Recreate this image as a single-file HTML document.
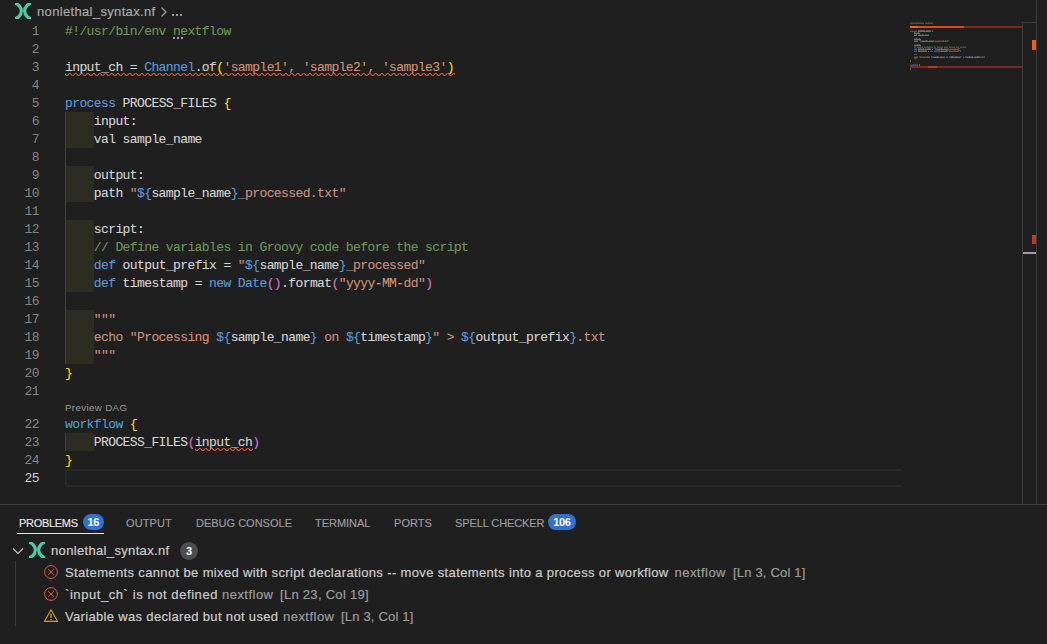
<!DOCTYPE html><html><head><meta charset="utf-8"><style>
*{margin:0;padding:0;box-sizing:border-box}
html,body{width:1047px;height:644px;overflow:hidden;background:#1f1f1f}
body{position:relative;font-family:"Liberation Sans",sans-serif}
.a{position:absolute;white-space:pre}
.code{font-family:"Liberation Mono",monospace;font-size:13px;letter-spacing:-0.6px;line-height:18px;height:18px;left:65px;padding-top:1px;-webkit-text-stroke:0.1px currentColor}
.ln{font-family:"Liberation Mono",monospace;font-size:13px;letter-spacing:-0.6px;padding-top:1px;line-height:18px;height:18px;left:0;width:39px;text-align:right;color:#858585}
.olive{position:absolute;background:#2d2c21;left:65px;width:29px}

.ui{font-size:13px;color:#cccccc;-webkit-text-stroke:0.2px currentColor}
.tab{font-size:11px;color:#9d9d9d;top:516px;line-height:14px;-webkit-text-stroke:0.15px currentColor}
</style></head><body>

<svg class="a" style="left:15px;top:3px" width="16" height="16" viewBox="0 0 16 16"><defs><clipPath id="c153"><rect x="0" y="0" width="16" height="16"/></clipPath></defs><g clip-path="url(#c153)" fill="none" stroke="#4bcaa3" stroke-width="3.2"><circle cx="-1.4" cy="8" r="7.75"/><circle cx="17.4" cy="8" r="7.75"/></g></svg>
<div class="a ui" style="left:37px;top:3px;line-height:18px;color:#a9a9a9;letter-spacing:0.34px">nonlethal_syntax.nf</div>
<svg class="a" style="left:159px;top:6px" width="10" height="12" viewBox="0 0 10 12"><path d="M2.5 1.5 L7 6 L2.5 10.5" fill="none" stroke="#a9a9a9" stroke-width="1.1"/></svg>
<div class="a" style="left:172px;top:14px;width:2px;height:2px;background:#999999"></div><div class="a" style="left:176px;top:14px;width:2px;height:2px;background:#999999"></div><div class="a" style="left:180px;top:14px;width:2px;height:2px;background:#999999"></div>
<div class="olive" style="top:112px;height:36px"></div>
<div class="olive" style="top:166px;height:36px"></div>
<div class="olive" style="top:220px;height:72px"></div>
<div class="olive" style="top:310px;height:54px"></div>
<div class="olive" style="top:433px;height:18px"></div>
<div class="a" style="left:65px;top:112px;width:1px;height:252px;background:#404040"></div>
<div class="a" style="left:65px;top:433px;width:1px;height:18px;background:#404040"></div>
<div class="a" style="left:65px;top:469px;width:837px;height:18px;border:2px solid #282828;border-right:none"></div>
<div class="a" style="left:65px;top:400px;font-size:9.8px;letter-spacing:0.32px;line-height:16px;color:#999999">Preview DAG</div>
<div class="a ln" style="top:22px;color:#858585">1</div>
<div class="a code" style="top:22px"><span style="color:#6a9955;-webkit-text-stroke-color:#6a9955">#!/usr/bin/env nextflow</span></div>
<div class="a ln" style="top:40px;color:#858585">2</div>
<div class="a ln" style="top:58px;color:#858585">3</div>
<div class="a code" style="top:58px"><span style="color:#d4d4d4;-webkit-text-stroke-color:#d4d4d4">input_ch = </span><span style="color:#569cd6;-webkit-text-stroke-color:#569cd6">Channel</span><span style="color:#d4d4d4;-webkit-text-stroke-color:#d4d4d4">.of</span><span style="color:#ffd700;-webkit-text-stroke-color:#ffd700">(</span><span style="color:#ce9178;-webkit-text-stroke-color:#ce9178">&#x27;sample1&#x27;, &#x27;sample2&#x27;, &#x27;sample3&#x27;</span><span style="color:#ffd700;-webkit-text-stroke-color:#ffd700">)</span></div>
<div class="a ln" style="top:76px;color:#858585">4</div>
<div class="a ln" style="top:94px;color:#858585">5</div>
<div class="a code" style="top:94px"><span style="color:#569cd6;-webkit-text-stroke-color:#569cd6">process</span><span style="color:#d4d4d4;-webkit-text-stroke-color:#d4d4d4"> PROCESS_FILES </span><span style="color:#ffd700;-webkit-text-stroke-color:#ffd700">{</span></div>
<div class="a ln" style="top:112px;color:#858585">6</div>
<div class="a code" style="top:112px"><span style="color:#d4d4d4;-webkit-text-stroke-color:#d4d4d4">    input:</span></div>
<div class="a ln" style="top:130px;color:#858585">7</div>
<div class="a code" style="top:130px"><span style="color:#d4d4d4;-webkit-text-stroke-color:#d4d4d4">    val sample_name</span></div>
<div class="a ln" style="top:148px;color:#858585">8</div>
<div class="a ln" style="top:166px;color:#858585">9</div>
<div class="a code" style="top:166px"><span style="color:#d4d4d4;-webkit-text-stroke-color:#d4d4d4">    output:</span></div>
<div class="a ln" style="top:184px;color:#858585">10</div>
<div class="a code" style="top:184px"><span style="color:#d4d4d4;-webkit-text-stroke-color:#d4d4d4">    path </span><span style="color:#ce9178;-webkit-text-stroke-color:#ce9178">&quot;</span><span style="color:#569cd6;-webkit-text-stroke-color:#569cd6">${</span><span style="color:#d4d4d4;-webkit-text-stroke-color:#d4d4d4">sample_name</span><span style="color:#569cd6;-webkit-text-stroke-color:#569cd6">}</span><span style="color:#ce9178;-webkit-text-stroke-color:#ce9178">_processed.txt&quot;</span></div>
<div class="a ln" style="top:202px;color:#858585">11</div>
<div class="a ln" style="top:220px;color:#858585">12</div>
<div class="a code" style="top:220px"><span style="color:#d4d4d4;-webkit-text-stroke-color:#d4d4d4">    script:</span></div>
<div class="a ln" style="top:238px;color:#858585">13</div>
<div class="a code" style="top:238px"><span style="color:#6a9955;-webkit-text-stroke-color:#6a9955">    // Define variables in Groovy code before the script</span></div>
<div class="a ln" style="top:256px;color:#858585">14</div>
<div class="a code" style="top:256px"><span style="color:#569cd6;-webkit-text-stroke-color:#569cd6">    def</span><span style="color:#d4d4d4;-webkit-text-stroke-color:#d4d4d4"> output_prefix = </span><span style="color:#ce9178;-webkit-text-stroke-color:#ce9178">&quot;</span><span style="color:#569cd6;-webkit-text-stroke-color:#569cd6">${</span><span style="color:#d4d4d4;-webkit-text-stroke-color:#d4d4d4">sample_name</span><span style="color:#569cd6;-webkit-text-stroke-color:#569cd6">}</span><span style="color:#ce9178;-webkit-text-stroke-color:#ce9178">_processed&quot;</span></div>
<div class="a ln" style="top:274px;color:#858585">15</div>
<div class="a code" style="top:274px"><span style="color:#569cd6;-webkit-text-stroke-color:#569cd6">    def</span><span style="color:#d4d4d4;-webkit-text-stroke-color:#d4d4d4"> timestamp = </span><span style="color:#569cd6;-webkit-text-stroke-color:#569cd6">new</span><span style="color:#d4d4d4;-webkit-text-stroke-color:#d4d4d4"> </span><span style="color:#569cd6;-webkit-text-stroke-color:#569cd6">Date</span><span style="color:#da70d6;-webkit-text-stroke-color:#da70d6">()</span><span style="color:#d4d4d4;-webkit-text-stroke-color:#d4d4d4">.format</span><span style="color:#da70d6;-webkit-text-stroke-color:#da70d6">(</span><span style="color:#ce9178;-webkit-text-stroke-color:#ce9178">&quot;yyyy-MM-dd&quot;</span><span style="color:#da70d6;-webkit-text-stroke-color:#da70d6">)</span></div>
<div class="a ln" style="top:292px;color:#858585">16</div>
<div class="a ln" style="top:310px;color:#858585">17</div>
<div class="a code" style="top:310px"><span style="color:#ce9178;-webkit-text-stroke-color:#ce9178">    &quot;&quot;&quot;</span></div>
<div class="a ln" style="top:328px;color:#858585">18</div>
<div class="a code" style="top:328px"><span style="color:#ce9178;-webkit-text-stroke-color:#ce9178">    echo &quot;Processing </span><span style="color:#569cd6;-webkit-text-stroke-color:#569cd6">${</span><span style="color:#d4d4d4;-webkit-text-stroke-color:#d4d4d4">sample_name</span><span style="color:#569cd6;-webkit-text-stroke-color:#569cd6">}</span><span style="color:#ce9178;-webkit-text-stroke-color:#ce9178"> on </span><span style="color:#569cd6;-webkit-text-stroke-color:#569cd6">${</span><span style="color:#d4d4d4;-webkit-text-stroke-color:#d4d4d4">timestamp</span><span style="color:#569cd6;-webkit-text-stroke-color:#569cd6">}</span><span style="color:#ce9178;-webkit-text-stroke-color:#ce9178">&quot; &gt; </span><span style="color:#569cd6;-webkit-text-stroke-color:#569cd6">${</span><span style="color:#d4d4d4;-webkit-text-stroke-color:#d4d4d4">output_prefix</span><span style="color:#569cd6;-webkit-text-stroke-color:#569cd6">}</span><span style="color:#ce9178;-webkit-text-stroke-color:#ce9178">.txt</span></div>
<div class="a ln" style="top:346px;color:#858585">19</div>
<div class="a code" style="top:346px"><span style="color:#ce9178;-webkit-text-stroke-color:#ce9178">    &quot;&quot;&quot;</span></div>
<div class="a ln" style="top:364px;color:#858585">20</div>
<div class="a code" style="top:364px"><span style="color:#ffd700;-webkit-text-stroke-color:#ffd700">}</span></div>
<div class="a ln" style="top:382px;color:#858585">21</div>
<div class="a ln" style="top:415px;color:#858585">22</div>
<div class="a code" style="top:415px"><span style="color:#569cd6;-webkit-text-stroke-color:#569cd6">workflow</span><span style="color:#d4d4d4;-webkit-text-stroke-color:#d4d4d4"> </span><span style="color:#ffd700;-webkit-text-stroke-color:#ffd700">{</span></div>
<div class="a ln" style="top:433px;color:#858585">23</div>
<div class="a code" style="top:433px"><span style="color:#d4d4d4;-webkit-text-stroke-color:#d4d4d4">    PROCESS_FILES</span><span style="color:#da70d6;-webkit-text-stroke-color:#da70d6">(</span><span style="color:#d4d4d4;-webkit-text-stroke-color:#d4d4d4">input_ch</span><span style="color:#da70d6;-webkit-text-stroke-color:#da70d6">)</span></div>
<div class="a ln" style="top:451px;color:#858585">24</div>
<div class="a code" style="top:451px"><span style="color:#ffd700;-webkit-text-stroke-color:#ffd700">}</span></div>
<div class="a ln" style="top:469px;color:#cccccc">25</div>
<svg class="a" style="left:0;top:0" width="1" height="1"><defs><pattern id="sqp" x="0" y="0" width="6" height="3" patternUnits="userSpaceOnUse"><g fill="#e6533f"><polygon points="5.5,0 2.5,3 1.1,3 4.1,0"/><polygon points="4,0 6,2 6,0.6 5.4,0"/><polygon points="0,2 1,3 2.4,3 0,0.6"/></g></pattern></defs></svg>
<svg class="a" style="left:65px;top:73px" width="390" height="3"><rect x="0" y="0" width="390" height="3" fill="url(#sqp)"/></svg>
<svg class="a" style="left:195px;top:448px" width="58" height="3"><rect x="0" y="0" width="58" height="3" fill="url(#sqp)"/></svg>
<div class="a" style="left:173px;top:37px;width:2px;height:2px;background:#a0a0a0"></div>
<div class="a" style="left:177px;top:37px;width:2px;height:2px;background:#a0a0a0"></div>
<div class="a" style="left:181px;top:37px;width:2px;height:2px;background:#a0a0a0"></div>
<svg class="a" style="left:0;top:0" width="1047" height="504"><rect x="910" y="22" width="1" height="1" fill="#6a9955" fill-opacity="0.32"/><rect x="910" y="23" width="1" height="1" fill="#6a9955" fill-opacity="0.44"/><rect x="911" y="22" width="1" height="1" fill="#6a9955" fill-opacity="0.32"/><rect x="911" y="23" width="1" height="1" fill="#6a9955" fill-opacity="0.44"/><rect x="912" y="22" width="1" height="1" fill="#6a9955" fill-opacity="0.32"/><rect x="912" y="23" width="1" height="1" fill="#6a9955" fill-opacity="0.44"/><rect x="913" y="22" width="1" height="1" fill="#6a9955" fill-opacity="0.17"/><rect x="913" y="23" width="1" height="1" fill="#6a9955" fill-opacity="0.44"/><rect x="914" y="22" width="1" height="1" fill="#6a9955" fill-opacity="0.17"/><rect x="914" y="23" width="1" height="1" fill="#6a9955" fill-opacity="0.44"/><rect x="915" y="22" width="1" height="1" fill="#6a9955" fill-opacity="0.17"/><rect x="915" y="23" width="1" height="1" fill="#6a9955" fill-opacity="0.44"/><rect x="916" y="22" width="1" height="1" fill="#6a9955" fill-opacity="0.32"/><rect x="916" y="23" width="1" height="1" fill="#6a9955" fill-opacity="0.44"/><rect x="917" y="22" width="1" height="1" fill="#6a9955" fill-opacity="0.32"/><rect x="917" y="23" width="1" height="1" fill="#6a9955" fill-opacity="0.44"/><rect x="918" y="22" width="1" height="1" fill="#6a9955" fill-opacity="0.32"/><rect x="918" y="23" width="1" height="1" fill="#6a9955" fill-opacity="0.44"/><rect x="919" y="22" width="1" height="1" fill="#6a9955" fill-opacity="0.17"/><rect x="919" y="23" width="1" height="1" fill="#6a9955" fill-opacity="0.44"/><rect x="920" y="22" width="1" height="1" fill="#6a9955" fill-opacity="0.32"/><rect x="920" y="23" width="1" height="1" fill="#6a9955" fill-opacity="0.44"/><rect x="921" y="22" width="1" height="1" fill="#6a9955" fill-opacity="0.17"/><rect x="921" y="23" width="1" height="1" fill="#6a9955" fill-opacity="0.44"/><rect x="922" y="22" width="1" height="1" fill="#6a9955" fill-opacity="0.17"/><rect x="922" y="23" width="1" height="1" fill="#6a9955" fill-opacity="0.44"/><rect x="923" y="22" width="1" height="1" fill="#6a9955" fill-opacity="0.17"/><rect x="923" y="23" width="1" height="1" fill="#6a9955" fill-opacity="0.44"/><rect x="925" y="22" width="1" height="1" fill="#6a9955" fill-opacity="0.17"/><rect x="925" y="23" width="1" height="1" fill="#6a9955" fill-opacity="0.44"/><rect x="926" y="22" width="1" height="1" fill="#6a9955" fill-opacity="0.17"/><rect x="926" y="23" width="1" height="1" fill="#6a9955" fill-opacity="0.44"/><rect x="927" y="22" width="1" height="1" fill="#6a9955" fill-opacity="0.17"/><rect x="927" y="23" width="1" height="1" fill="#6a9955" fill-opacity="0.44"/><rect x="928" y="22" width="1" height="1" fill="#6a9955" fill-opacity="0.32"/><rect x="928" y="23" width="1" height="1" fill="#6a9955" fill-opacity="0.44"/><rect x="929" y="22" width="1" height="1" fill="#6a9955" fill-opacity="0.32"/><rect x="929" y="23" width="1" height="1" fill="#6a9955" fill-opacity="0.44"/><rect x="930" y="22" width="1" height="1" fill="#6a9955" fill-opacity="0.32"/><rect x="930" y="23" width="1" height="1" fill="#6a9955" fill-opacity="0.44"/><rect x="931" y="22" width="1" height="1" fill="#6a9955" fill-opacity="0.17"/><rect x="931" y="23" width="1" height="1" fill="#6a9955" fill-opacity="0.44"/><rect x="932" y="22" width="1" height="1" fill="#6a9955" fill-opacity="0.17"/><rect x="932" y="23" width="1" height="1" fill="#6a9955" fill-opacity="0.44"/><rect x="910" y="26" width="1" height="1" fill="#d4d4d4" fill-opacity="0.32"/><rect x="910" y="27" width="1" height="1" fill="#d4d4d4" fill-opacity="0.44"/><rect x="911" y="26" width="1" height="1" fill="#d4d4d4" fill-opacity="0.17"/><rect x="911" y="27" width="1" height="1" fill="#d4d4d4" fill-opacity="0.44"/><rect x="912" y="26" width="1" height="1" fill="#d4d4d4" fill-opacity="0.17"/><rect x="912" y="27" width="1" height="1" fill="#d4d4d4" fill-opacity="0.44"/><rect x="913" y="26" width="1" height="1" fill="#d4d4d4" fill-opacity="0.17"/><rect x="913" y="27" width="1" height="1" fill="#d4d4d4" fill-opacity="0.44"/><rect x="914" y="26" width="1" height="1" fill="#d4d4d4" fill-opacity="0.32"/><rect x="914" y="27" width="1" height="1" fill="#d4d4d4" fill-opacity="0.44"/><rect x="915" y="26" width="1" height="1" fill="#d4d4d4" fill-opacity="0.00"/><rect x="915" y="27" width="1" height="1" fill="#d4d4d4" fill-opacity="0.40"/><rect x="916" y="26" width="1" height="1" fill="#d4d4d4" fill-opacity="0.17"/><rect x="916" y="27" width="1" height="1" fill="#d4d4d4" fill-opacity="0.44"/><rect x="917" y="26" width="1" height="1" fill="#d4d4d4" fill-opacity="0.32"/><rect x="917" y="27" width="1" height="1" fill="#d4d4d4" fill-opacity="0.44"/><rect x="919" y="26" width="1" height="1" fill="#d4d4d4" fill-opacity="0.08"/><rect x="919" y="27" width="1" height="1" fill="#d4d4d4" fill-opacity="0.44"/><rect x="921" y="26" width="1" height="1" fill="#569cd6" fill-opacity="0.32"/><rect x="921" y="27" width="1" height="1" fill="#569cd6" fill-opacity="0.44"/><rect x="922" y="26" width="1" height="1" fill="#569cd6" fill-opacity="0.32"/><rect x="922" y="27" width="1" height="1" fill="#569cd6" fill-opacity="0.44"/><rect x="923" y="26" width="1" height="1" fill="#569cd6" fill-opacity="0.17"/><rect x="923" y="27" width="1" height="1" fill="#569cd6" fill-opacity="0.44"/><rect x="924" y="26" width="1" height="1" fill="#569cd6" fill-opacity="0.17"/><rect x="924" y="27" width="1" height="1" fill="#569cd6" fill-opacity="0.44"/><rect x="925" y="26" width="1" height="1" fill="#569cd6" fill-opacity="0.17"/><rect x="925" y="27" width="1" height="1" fill="#569cd6" fill-opacity="0.44"/><rect x="926" y="26" width="1" height="1" fill="#569cd6" fill-opacity="0.17"/><rect x="926" y="27" width="1" height="1" fill="#569cd6" fill-opacity="0.44"/><rect x="927" y="26" width="1" height="1" fill="#569cd6" fill-opacity="0.32"/><rect x="927" y="27" width="1" height="1" fill="#569cd6" fill-opacity="0.44"/><rect x="928" y="26" width="1" height="1" fill="#d4d4d4" fill-opacity="0.08"/><rect x="928" y="27" width="1" height="1" fill="#d4d4d4" fill-opacity="0.32"/><rect x="929" y="26" width="1" height="1" fill="#d4d4d4" fill-opacity="0.17"/><rect x="929" y="27" width="1" height="1" fill="#d4d4d4" fill-opacity="0.44"/><rect x="930" y="26" width="1" height="1" fill="#d4d4d4" fill-opacity="0.32"/><rect x="930" y="27" width="1" height="1" fill="#d4d4d4" fill-opacity="0.44"/><rect x="931" y="26" width="1" height="1" fill="#ffd700" fill-opacity="0.32"/><rect x="931" y="27" width="1" height="1" fill="#ffd700" fill-opacity="0.44"/><rect x="932" y="26" width="1" height="1" fill="#ce9178" fill-opacity="0.32"/><rect x="932" y="27" width="1" height="1" fill="#ce9178" fill-opacity="0.08"/><rect x="933" y="26" width="1" height="1" fill="#ce9178" fill-opacity="0.17"/><rect x="933" y="27" width="1" height="1" fill="#ce9178" fill-opacity="0.44"/><rect x="934" y="26" width="1" height="1" fill="#ce9178" fill-opacity="0.17"/><rect x="934" y="27" width="1" height="1" fill="#ce9178" fill-opacity="0.44"/><rect x="935" y="26" width="1" height="1" fill="#ce9178" fill-opacity="0.17"/><rect x="935" y="27" width="1" height="1" fill="#ce9178" fill-opacity="0.44"/><rect x="936" y="26" width="1" height="1" fill="#ce9178" fill-opacity="0.17"/><rect x="936" y="27" width="1" height="1" fill="#ce9178" fill-opacity="0.44"/><rect x="937" y="26" width="1" height="1" fill="#ce9178" fill-opacity="0.32"/><rect x="937" y="27" width="1" height="1" fill="#ce9178" fill-opacity="0.44"/><rect x="938" y="26" width="1" height="1" fill="#ce9178" fill-opacity="0.17"/><rect x="938" y="27" width="1" height="1" fill="#ce9178" fill-opacity="0.44"/><rect x="939" y="26" width="1" height="1" fill="#ce9178" fill-opacity="0.32"/><rect x="939" y="27" width="1" height="1" fill="#ce9178" fill-opacity="0.44"/><rect x="940" y="26" width="1" height="1" fill="#ce9178" fill-opacity="0.32"/><rect x="940" y="27" width="1" height="1" fill="#ce9178" fill-opacity="0.08"/><rect x="941" y="26" width="1" height="1" fill="#ce9178" fill-opacity="0.08"/><rect x="941" y="27" width="1" height="1" fill="#ce9178" fill-opacity="0.32"/><rect x="943" y="26" width="1" height="1" fill="#ce9178" fill-opacity="0.32"/><rect x="943" y="27" width="1" height="1" fill="#ce9178" fill-opacity="0.08"/><rect x="944" y="26" width="1" height="1" fill="#ce9178" fill-opacity="0.17"/><rect x="944" y="27" width="1" height="1" fill="#ce9178" fill-opacity="0.44"/><rect x="945" y="26" width="1" height="1" fill="#ce9178" fill-opacity="0.17"/><rect x="945" y="27" width="1" height="1" fill="#ce9178" fill-opacity="0.44"/><rect x="946" y="26" width="1" height="1" fill="#ce9178" fill-opacity="0.17"/><rect x="946" y="27" width="1" height="1" fill="#ce9178" fill-opacity="0.44"/><rect x="947" y="26" width="1" height="1" fill="#ce9178" fill-opacity="0.17"/><rect x="947" y="27" width="1" height="1" fill="#ce9178" fill-opacity="0.44"/><rect x="948" y="26" width="1" height="1" fill="#ce9178" fill-opacity="0.32"/><rect x="948" y="27" width="1" height="1" fill="#ce9178" fill-opacity="0.44"/><rect x="949" y="26" width="1" height="1" fill="#ce9178" fill-opacity="0.17"/><rect x="949" y="27" width="1" height="1" fill="#ce9178" fill-opacity="0.44"/><rect x="950" y="26" width="1" height="1" fill="#ce9178" fill-opacity="0.32"/><rect x="950" y="27" width="1" height="1" fill="#ce9178" fill-opacity="0.44"/><rect x="951" y="26" width="1" height="1" fill="#ce9178" fill-opacity="0.32"/><rect x="951" y="27" width="1" height="1" fill="#ce9178" fill-opacity="0.08"/><rect x="952" y="26" width="1" height="1" fill="#ce9178" fill-opacity="0.08"/><rect x="952" y="27" width="1" height="1" fill="#ce9178" fill-opacity="0.32"/><rect x="954" y="26" width="1" height="1" fill="#ce9178" fill-opacity="0.32"/><rect x="954" y="27" width="1" height="1" fill="#ce9178" fill-opacity="0.08"/><rect x="955" y="26" width="1" height="1" fill="#ce9178" fill-opacity="0.17"/><rect x="955" y="27" width="1" height="1" fill="#ce9178" fill-opacity="0.44"/><rect x="956" y="26" width="1" height="1" fill="#ce9178" fill-opacity="0.17"/><rect x="956" y="27" width="1" height="1" fill="#ce9178" fill-opacity="0.44"/><rect x="957" y="26" width="1" height="1" fill="#ce9178" fill-opacity="0.17"/><rect x="957" y="27" width="1" height="1" fill="#ce9178" fill-opacity="0.44"/><rect x="958" y="26" width="1" height="1" fill="#ce9178" fill-opacity="0.17"/><rect x="958" y="27" width="1" height="1" fill="#ce9178" fill-opacity="0.44"/><rect x="959" y="26" width="1" height="1" fill="#ce9178" fill-opacity="0.32"/><rect x="959" y="27" width="1" height="1" fill="#ce9178" fill-opacity="0.44"/><rect x="960" y="26" width="1" height="1" fill="#ce9178" fill-opacity="0.17"/><rect x="960" y="27" width="1" height="1" fill="#ce9178" fill-opacity="0.44"/><rect x="961" y="26" width="1" height="1" fill="#ce9178" fill-opacity="0.32"/><rect x="961" y="27" width="1" height="1" fill="#ce9178" fill-opacity="0.44"/><rect x="962" y="26" width="1" height="1" fill="#ce9178" fill-opacity="0.32"/><rect x="962" y="27" width="1" height="1" fill="#ce9178" fill-opacity="0.08"/><rect x="963" y="26" width="1" height="1" fill="#ffd700" fill-opacity="0.32"/><rect x="963" y="27" width="1" height="1" fill="#ffd700" fill-opacity="0.44"/><rect x="910" y="30" width="1" height="1" fill="#569cd6" fill-opacity="0.17"/><rect x="910" y="31" width="1" height="1" fill="#569cd6" fill-opacity="0.44"/><rect x="911" y="30" width="1" height="1" fill="#569cd6" fill-opacity="0.17"/><rect x="911" y="31" width="1" height="1" fill="#569cd6" fill-opacity="0.44"/><rect x="912" y="30" width="1" height="1" fill="#569cd6" fill-opacity="0.17"/><rect x="912" y="31" width="1" height="1" fill="#569cd6" fill-opacity="0.44"/><rect x="913" y="30" width="1" height="1" fill="#569cd6" fill-opacity="0.17"/><rect x="913" y="31" width="1" height="1" fill="#569cd6" fill-opacity="0.44"/><rect x="914" y="30" width="1" height="1" fill="#569cd6" fill-opacity="0.17"/><rect x="914" y="31" width="1" height="1" fill="#569cd6" fill-opacity="0.44"/><rect x="915" y="30" width="1" height="1" fill="#569cd6" fill-opacity="0.17"/><rect x="915" y="31" width="1" height="1" fill="#569cd6" fill-opacity="0.44"/><rect x="916" y="30" width="1" height="1" fill="#569cd6" fill-opacity="0.17"/><rect x="916" y="31" width="1" height="1" fill="#569cd6" fill-opacity="0.44"/><rect x="918" y="30" width="1" height="1" fill="#d4d4d4" fill-opacity="0.32"/><rect x="918" y="31" width="1" height="1" fill="#d4d4d4" fill-opacity="0.44"/><rect x="919" y="30" width="1" height="1" fill="#d4d4d4" fill-opacity="0.32"/><rect x="919" y="31" width="1" height="1" fill="#d4d4d4" fill-opacity="0.44"/><rect x="920" y="30" width="1" height="1" fill="#d4d4d4" fill-opacity="0.32"/><rect x="920" y="31" width="1" height="1" fill="#d4d4d4" fill-opacity="0.44"/><rect x="921" y="30" width="1" height="1" fill="#d4d4d4" fill-opacity="0.32"/><rect x="921" y="31" width="1" height="1" fill="#d4d4d4" fill-opacity="0.44"/><rect x="922" y="30" width="1" height="1" fill="#d4d4d4" fill-opacity="0.32"/><rect x="922" y="31" width="1" height="1" fill="#d4d4d4" fill-opacity="0.44"/><rect x="923" y="30" width="1" height="1" fill="#d4d4d4" fill-opacity="0.32"/><rect x="923" y="31" width="1" height="1" fill="#d4d4d4" fill-opacity="0.44"/><rect x="924" y="30" width="1" height="1" fill="#d4d4d4" fill-opacity="0.32"/><rect x="924" y="31" width="1" height="1" fill="#d4d4d4" fill-opacity="0.44"/><rect x="925" y="30" width="1" height="1" fill="#d4d4d4" fill-opacity="0.00"/><rect x="925" y="31" width="1" height="1" fill="#d4d4d4" fill-opacity="0.40"/><rect x="926" y="30" width="1" height="1" fill="#d4d4d4" fill-opacity="0.32"/><rect x="926" y="31" width="1" height="1" fill="#d4d4d4" fill-opacity="0.44"/><rect x="927" y="30" width="1" height="1" fill="#d4d4d4" fill-opacity="0.32"/><rect x="927" y="31" width="1" height="1" fill="#d4d4d4" fill-opacity="0.44"/><rect x="928" y="30" width="1" height="1" fill="#d4d4d4" fill-opacity="0.32"/><rect x="928" y="31" width="1" height="1" fill="#d4d4d4" fill-opacity="0.44"/><rect x="929" y="30" width="1" height="1" fill="#d4d4d4" fill-opacity="0.32"/><rect x="929" y="31" width="1" height="1" fill="#d4d4d4" fill-opacity="0.44"/><rect x="930" y="30" width="1" height="1" fill="#d4d4d4" fill-opacity="0.32"/><rect x="930" y="31" width="1" height="1" fill="#d4d4d4" fill-opacity="0.44"/><rect x="932" y="30" width="1" height="1" fill="#ffd700" fill-opacity="0.32"/><rect x="932" y="31" width="1" height="1" fill="#ffd700" fill-opacity="0.44"/><rect x="914" y="32" width="1" height="1" fill="#d4d4d4" fill-opacity="0.32"/><rect x="914" y="33" width="1" height="1" fill="#d4d4d4" fill-opacity="0.44"/><rect x="915" y="32" width="1" height="1" fill="#d4d4d4" fill-opacity="0.17"/><rect x="915" y="33" width="1" height="1" fill="#d4d4d4" fill-opacity="0.44"/><rect x="916" y="32" width="1" height="1" fill="#d4d4d4" fill-opacity="0.17"/><rect x="916" y="33" width="1" height="1" fill="#d4d4d4" fill-opacity="0.44"/><rect x="917" y="32" width="1" height="1" fill="#d4d4d4" fill-opacity="0.17"/><rect x="917" y="33" width="1" height="1" fill="#d4d4d4" fill-opacity="0.44"/><rect x="918" y="32" width="1" height="1" fill="#d4d4d4" fill-opacity="0.32"/><rect x="918" y="33" width="1" height="1" fill="#d4d4d4" fill-opacity="0.44"/><rect x="919" y="32" width="1" height="1" fill="#d4d4d4" fill-opacity="0.08"/><rect x="919" y="33" width="1" height="1" fill="#d4d4d4" fill-opacity="0.44"/><rect x="914" y="34" width="1" height="1" fill="#d4d4d4" fill-opacity="0.17"/><rect x="914" y="35" width="1" height="1" fill="#d4d4d4" fill-opacity="0.44"/><rect x="915" y="34" width="1" height="1" fill="#d4d4d4" fill-opacity="0.17"/><rect x="915" y="35" width="1" height="1" fill="#d4d4d4" fill-opacity="0.44"/><rect x="916" y="34" width="1" height="1" fill="#d4d4d4" fill-opacity="0.32"/><rect x="916" y="35" width="1" height="1" fill="#d4d4d4" fill-opacity="0.44"/><rect x="918" y="34" width="1" height="1" fill="#d4d4d4" fill-opacity="0.17"/><rect x="918" y="35" width="1" height="1" fill="#d4d4d4" fill-opacity="0.44"/><rect x="919" y="34" width="1" height="1" fill="#d4d4d4" fill-opacity="0.17"/><rect x="919" y="35" width="1" height="1" fill="#d4d4d4" fill-opacity="0.44"/><rect x="920" y="34" width="1" height="1" fill="#d4d4d4" fill-opacity="0.17"/><rect x="920" y="35" width="1" height="1" fill="#d4d4d4" fill-opacity="0.44"/><rect x="921" y="34" width="1" height="1" fill="#d4d4d4" fill-opacity="0.17"/><rect x="921" y="35" width="1" height="1" fill="#d4d4d4" fill-opacity="0.44"/><rect x="922" y="34" width="1" height="1" fill="#d4d4d4" fill-opacity="0.32"/><rect x="922" y="35" width="1" height="1" fill="#d4d4d4" fill-opacity="0.44"/><rect x="923" y="34" width="1" height="1" fill="#d4d4d4" fill-opacity="0.17"/><rect x="923" y="35" width="1" height="1" fill="#d4d4d4" fill-opacity="0.44"/><rect x="924" y="34" width="1" height="1" fill="#d4d4d4" fill-opacity="0.00"/><rect x="924" y="35" width="1" height="1" fill="#d4d4d4" fill-opacity="0.40"/><rect x="925" y="34" width="1" height="1" fill="#d4d4d4" fill-opacity="0.17"/><rect x="925" y="35" width="1" height="1" fill="#d4d4d4" fill-opacity="0.44"/><rect x="926" y="34" width="1" height="1" fill="#d4d4d4" fill-opacity="0.17"/><rect x="926" y="35" width="1" height="1" fill="#d4d4d4" fill-opacity="0.44"/><rect x="927" y="34" width="1" height="1" fill="#d4d4d4" fill-opacity="0.17"/><rect x="927" y="35" width="1" height="1" fill="#d4d4d4" fill-opacity="0.44"/><rect x="928" y="34" width="1" height="1" fill="#d4d4d4" fill-opacity="0.17"/><rect x="928" y="35" width="1" height="1" fill="#d4d4d4" fill-opacity="0.44"/><rect x="914" y="38" width="1" height="1" fill="#d4d4d4" fill-opacity="0.17"/><rect x="914" y="39" width="1" height="1" fill="#d4d4d4" fill-opacity="0.44"/><rect x="915" y="38" width="1" height="1" fill="#d4d4d4" fill-opacity="0.17"/><rect x="915" y="39" width="1" height="1" fill="#d4d4d4" fill-opacity="0.44"/><rect x="916" y="38" width="1" height="1" fill="#d4d4d4" fill-opacity="0.32"/><rect x="916" y="39" width="1" height="1" fill="#d4d4d4" fill-opacity="0.44"/><rect x="917" y="38" width="1" height="1" fill="#d4d4d4" fill-opacity="0.17"/><rect x="917" y="39" width="1" height="1" fill="#d4d4d4" fill-opacity="0.44"/><rect x="918" y="38" width="1" height="1" fill="#d4d4d4" fill-opacity="0.17"/><rect x="918" y="39" width="1" height="1" fill="#d4d4d4" fill-opacity="0.44"/><rect x="919" y="38" width="1" height="1" fill="#d4d4d4" fill-opacity="0.32"/><rect x="919" y="39" width="1" height="1" fill="#d4d4d4" fill-opacity="0.44"/><rect x="920" y="38" width="1" height="1" fill="#d4d4d4" fill-opacity="0.08"/><rect x="920" y="39" width="1" height="1" fill="#d4d4d4" fill-opacity="0.44"/><rect x="914" y="40" width="1" height="1" fill="#d4d4d4" fill-opacity="0.17"/><rect x="914" y="41" width="1" height="1" fill="#d4d4d4" fill-opacity="0.44"/><rect x="915" y="40" width="1" height="1" fill="#d4d4d4" fill-opacity="0.17"/><rect x="915" y="41" width="1" height="1" fill="#d4d4d4" fill-opacity="0.44"/><rect x="916" y="40" width="1" height="1" fill="#d4d4d4" fill-opacity="0.32"/><rect x="916" y="41" width="1" height="1" fill="#d4d4d4" fill-opacity="0.44"/><rect x="917" y="40" width="1" height="1" fill="#d4d4d4" fill-opacity="0.32"/><rect x="917" y="41" width="1" height="1" fill="#d4d4d4" fill-opacity="0.44"/><rect x="919" y="40" width="1" height="1" fill="#ce9178" fill-opacity="0.32"/><rect x="919" y="41" width="1" height="1" fill="#ce9178" fill-opacity="0.08"/><rect x="920" y="40" width="1" height="1" fill="#569cd6" fill-opacity="0.32"/><rect x="920" y="41" width="1" height="1" fill="#569cd6" fill-opacity="0.44"/><rect x="921" y="40" width="1" height="1" fill="#569cd6" fill-opacity="0.32"/><rect x="921" y="41" width="1" height="1" fill="#569cd6" fill-opacity="0.44"/><rect x="922" y="40" width="1" height="1" fill="#d4d4d4" fill-opacity="0.17"/><rect x="922" y="41" width="1" height="1" fill="#d4d4d4" fill-opacity="0.44"/><rect x="923" y="40" width="1" height="1" fill="#d4d4d4" fill-opacity="0.17"/><rect x="923" y="41" width="1" height="1" fill="#d4d4d4" fill-opacity="0.44"/><rect x="924" y="40" width="1" height="1" fill="#d4d4d4" fill-opacity="0.17"/><rect x="924" y="41" width="1" height="1" fill="#d4d4d4" fill-opacity="0.44"/><rect x="925" y="40" width="1" height="1" fill="#d4d4d4" fill-opacity="0.17"/><rect x="925" y="41" width="1" height="1" fill="#d4d4d4" fill-opacity="0.44"/><rect x="926" y="40" width="1" height="1" fill="#d4d4d4" fill-opacity="0.32"/><rect x="926" y="41" width="1" height="1" fill="#d4d4d4" fill-opacity="0.44"/><rect x="927" y="40" width="1" height="1" fill="#d4d4d4" fill-opacity="0.17"/><rect x="927" y="41" width="1" height="1" fill="#d4d4d4" fill-opacity="0.44"/><rect x="928" y="40" width="1" height="1" fill="#d4d4d4" fill-opacity="0.00"/><rect x="928" y="41" width="1" height="1" fill="#d4d4d4" fill-opacity="0.40"/><rect x="929" y="40" width="1" height="1" fill="#d4d4d4" fill-opacity="0.17"/><rect x="929" y="41" width="1" height="1" fill="#d4d4d4" fill-opacity="0.44"/><rect x="930" y="40" width="1" height="1" fill="#d4d4d4" fill-opacity="0.17"/><rect x="930" y="41" width="1" height="1" fill="#d4d4d4" fill-opacity="0.44"/><rect x="931" y="40" width="1" height="1" fill="#d4d4d4" fill-opacity="0.17"/><rect x="931" y="41" width="1" height="1" fill="#d4d4d4" fill-opacity="0.44"/><rect x="932" y="40" width="1" height="1" fill="#d4d4d4" fill-opacity="0.17"/><rect x="932" y="41" width="1" height="1" fill="#d4d4d4" fill-opacity="0.44"/><rect x="933" y="40" width="1" height="1" fill="#569cd6" fill-opacity="0.32"/><rect x="933" y="41" width="1" height="1" fill="#569cd6" fill-opacity="0.44"/><rect x="934" y="40" width="1" height="1" fill="#ce9178" fill-opacity="0.00"/><rect x="934" y="41" width="1" height="1" fill="#ce9178" fill-opacity="0.40"/><rect x="935" y="40" width="1" height="1" fill="#ce9178" fill-opacity="0.17"/><rect x="935" y="41" width="1" height="1" fill="#ce9178" fill-opacity="0.44"/><rect x="936" y="40" width="1" height="1" fill="#ce9178" fill-opacity="0.17"/><rect x="936" y="41" width="1" height="1" fill="#ce9178" fill-opacity="0.44"/><rect x="937" y="40" width="1" height="1" fill="#ce9178" fill-opacity="0.17"/><rect x="937" y="41" width="1" height="1" fill="#ce9178" fill-opacity="0.44"/><rect x="938" y="40" width="1" height="1" fill="#ce9178" fill-opacity="0.17"/><rect x="938" y="41" width="1" height="1" fill="#ce9178" fill-opacity="0.44"/><rect x="939" y="40" width="1" height="1" fill="#ce9178" fill-opacity="0.17"/><rect x="939" y="41" width="1" height="1" fill="#ce9178" fill-opacity="0.44"/><rect x="940" y="40" width="1" height="1" fill="#ce9178" fill-opacity="0.17"/><rect x="940" y="41" width="1" height="1" fill="#ce9178" fill-opacity="0.44"/><rect x="941" y="40" width="1" height="1" fill="#ce9178" fill-opacity="0.17"/><rect x="941" y="41" width="1" height="1" fill="#ce9178" fill-opacity="0.44"/><rect x="942" y="40" width="1" height="1" fill="#ce9178" fill-opacity="0.17"/><rect x="942" y="41" width="1" height="1" fill="#ce9178" fill-opacity="0.44"/><rect x="943" y="40" width="1" height="1" fill="#ce9178" fill-opacity="0.32"/><rect x="943" y="41" width="1" height="1" fill="#ce9178" fill-opacity="0.44"/><rect x="944" y="40" width="1" height="1" fill="#ce9178" fill-opacity="0.08"/><rect x="944" y="41" width="1" height="1" fill="#ce9178" fill-opacity="0.32"/><rect x="945" y="40" width="1" height="1" fill="#ce9178" fill-opacity="0.32"/><rect x="945" y="41" width="1" height="1" fill="#ce9178" fill-opacity="0.44"/><rect x="946" y="40" width="1" height="1" fill="#ce9178" fill-opacity="0.17"/><rect x="946" y="41" width="1" height="1" fill="#ce9178" fill-opacity="0.44"/><rect x="947" y="40" width="1" height="1" fill="#ce9178" fill-opacity="0.32"/><rect x="947" y="41" width="1" height="1" fill="#ce9178" fill-opacity="0.44"/><rect x="948" y="40" width="1" height="1" fill="#ce9178" fill-opacity="0.32"/><rect x="948" y="41" width="1" height="1" fill="#ce9178" fill-opacity="0.08"/><rect x="914" y="44" width="1" height="1" fill="#d4d4d4" fill-opacity="0.17"/><rect x="914" y="45" width="1" height="1" fill="#d4d4d4" fill-opacity="0.44"/><rect x="915" y="44" width="1" height="1" fill="#d4d4d4" fill-opacity="0.17"/><rect x="915" y="45" width="1" height="1" fill="#d4d4d4" fill-opacity="0.44"/><rect x="916" y="44" width="1" height="1" fill="#d4d4d4" fill-opacity="0.17"/><rect x="916" y="45" width="1" height="1" fill="#d4d4d4" fill-opacity="0.44"/><rect x="917" y="44" width="1" height="1" fill="#d4d4d4" fill-opacity="0.32"/><rect x="917" y="45" width="1" height="1" fill="#d4d4d4" fill-opacity="0.44"/><rect x="918" y="44" width="1" height="1" fill="#d4d4d4" fill-opacity="0.17"/><rect x="918" y="45" width="1" height="1" fill="#d4d4d4" fill-opacity="0.44"/><rect x="919" y="44" width="1" height="1" fill="#d4d4d4" fill-opacity="0.32"/><rect x="919" y="45" width="1" height="1" fill="#d4d4d4" fill-opacity="0.44"/><rect x="920" y="44" width="1" height="1" fill="#d4d4d4" fill-opacity="0.08"/><rect x="920" y="45" width="1" height="1" fill="#d4d4d4" fill-opacity="0.44"/><rect x="914" y="46" width="1" height="1" fill="#6a9955" fill-opacity="0.32"/><rect x="914" y="47" width="1" height="1" fill="#6a9955" fill-opacity="0.44"/><rect x="915" y="46" width="1" height="1" fill="#6a9955" fill-opacity="0.32"/><rect x="915" y="47" width="1" height="1" fill="#6a9955" fill-opacity="0.44"/><rect x="917" y="46" width="1" height="1" fill="#6a9955" fill-opacity="0.32"/><rect x="917" y="47" width="1" height="1" fill="#6a9955" fill-opacity="0.44"/><rect x="918" y="46" width="1" height="1" fill="#6a9955" fill-opacity="0.17"/><rect x="918" y="47" width="1" height="1" fill="#6a9955" fill-opacity="0.44"/><rect x="919" y="46" width="1" height="1" fill="#6a9955" fill-opacity="0.32"/><rect x="919" y="47" width="1" height="1" fill="#6a9955" fill-opacity="0.44"/><rect x="920" y="46" width="1" height="1" fill="#6a9955" fill-opacity="0.32"/><rect x="920" y="47" width="1" height="1" fill="#6a9955" fill-opacity="0.44"/><rect x="921" y="46" width="1" height="1" fill="#6a9955" fill-opacity="0.17"/><rect x="921" y="47" width="1" height="1" fill="#6a9955" fill-opacity="0.44"/><rect x="922" y="46" width="1" height="1" fill="#6a9955" fill-opacity="0.17"/><rect x="922" y="47" width="1" height="1" fill="#6a9955" fill-opacity="0.44"/><rect x="924" y="46" width="1" height="1" fill="#6a9955" fill-opacity="0.17"/><rect x="924" y="47" width="1" height="1" fill="#6a9955" fill-opacity="0.44"/><rect x="925" y="46" width="1" height="1" fill="#6a9955" fill-opacity="0.17"/><rect x="925" y="47" width="1" height="1" fill="#6a9955" fill-opacity="0.44"/><rect x="926" y="46" width="1" height="1" fill="#6a9955" fill-opacity="0.17"/><rect x="926" y="47" width="1" height="1" fill="#6a9955" fill-opacity="0.44"/><rect x="927" y="46" width="1" height="1" fill="#6a9955" fill-opacity="0.32"/><rect x="927" y="47" width="1" height="1" fill="#6a9955" fill-opacity="0.44"/><rect x="928" y="46" width="1" height="1" fill="#6a9955" fill-opacity="0.17"/><rect x="928" y="47" width="1" height="1" fill="#6a9955" fill-opacity="0.44"/><rect x="929" y="46" width="1" height="1" fill="#6a9955" fill-opacity="0.32"/><rect x="929" y="47" width="1" height="1" fill="#6a9955" fill-opacity="0.44"/><rect x="930" y="46" width="1" height="1" fill="#6a9955" fill-opacity="0.32"/><rect x="930" y="47" width="1" height="1" fill="#6a9955" fill-opacity="0.44"/><rect x="931" y="46" width="1" height="1" fill="#6a9955" fill-opacity="0.17"/><rect x="931" y="47" width="1" height="1" fill="#6a9955" fill-opacity="0.44"/><rect x="932" y="46" width="1" height="1" fill="#6a9955" fill-opacity="0.17"/><rect x="932" y="47" width="1" height="1" fill="#6a9955" fill-opacity="0.44"/><rect x="934" y="46" width="1" height="1" fill="#6a9955" fill-opacity="0.32"/><rect x="934" y="47" width="1" height="1" fill="#6a9955" fill-opacity="0.44"/><rect x="935" y="46" width="1" height="1" fill="#6a9955" fill-opacity="0.17"/><rect x="935" y="47" width="1" height="1" fill="#6a9955" fill-opacity="0.44"/><rect x="937" y="46" width="1" height="1" fill="#6a9955" fill-opacity="0.32"/><rect x="937" y="47" width="1" height="1" fill="#6a9955" fill-opacity="0.44"/><rect x="938" y="46" width="1" height="1" fill="#6a9955" fill-opacity="0.17"/><rect x="938" y="47" width="1" height="1" fill="#6a9955" fill-opacity="0.44"/><rect x="939" y="46" width="1" height="1" fill="#6a9955" fill-opacity="0.17"/><rect x="939" y="47" width="1" height="1" fill="#6a9955" fill-opacity="0.44"/><rect x="940" y="46" width="1" height="1" fill="#6a9955" fill-opacity="0.17"/><rect x="940" y="47" width="1" height="1" fill="#6a9955" fill-opacity="0.44"/><rect x="941" y="46" width="1" height="1" fill="#6a9955" fill-opacity="0.17"/><rect x="941" y="47" width="1" height="1" fill="#6a9955" fill-opacity="0.44"/><rect x="942" y="46" width="1" height="1" fill="#6a9955" fill-opacity="0.17"/><rect x="942" y="47" width="1" height="1" fill="#6a9955" fill-opacity="0.44"/><rect x="944" y="46" width="1" height="1" fill="#6a9955" fill-opacity="0.17"/><rect x="944" y="47" width="1" height="1" fill="#6a9955" fill-opacity="0.44"/><rect x="945" y="46" width="1" height="1" fill="#6a9955" fill-opacity="0.17"/><rect x="945" y="47" width="1" height="1" fill="#6a9955" fill-opacity="0.44"/><rect x="946" y="46" width="1" height="1" fill="#6a9955" fill-opacity="0.32"/><rect x="946" y="47" width="1" height="1" fill="#6a9955" fill-opacity="0.44"/><rect x="947" y="46" width="1" height="1" fill="#6a9955" fill-opacity="0.17"/><rect x="947" y="47" width="1" height="1" fill="#6a9955" fill-opacity="0.44"/><rect x="949" y="46" width="1" height="1" fill="#6a9955" fill-opacity="0.32"/><rect x="949" y="47" width="1" height="1" fill="#6a9955" fill-opacity="0.44"/><rect x="950" y="46" width="1" height="1" fill="#6a9955" fill-opacity="0.17"/><rect x="950" y="47" width="1" height="1" fill="#6a9955" fill-opacity="0.44"/><rect x="951" y="46" width="1" height="1" fill="#6a9955" fill-opacity="0.32"/><rect x="951" y="47" width="1" height="1" fill="#6a9955" fill-opacity="0.44"/><rect x="952" y="46" width="1" height="1" fill="#6a9955" fill-opacity="0.17"/><rect x="952" y="47" width="1" height="1" fill="#6a9955" fill-opacity="0.44"/><rect x="953" y="46" width="1" height="1" fill="#6a9955" fill-opacity="0.17"/><rect x="953" y="47" width="1" height="1" fill="#6a9955" fill-opacity="0.44"/><rect x="954" y="46" width="1" height="1" fill="#6a9955" fill-opacity="0.17"/><rect x="954" y="47" width="1" height="1" fill="#6a9955" fill-opacity="0.44"/><rect x="956" y="46" width="1" height="1" fill="#6a9955" fill-opacity="0.32"/><rect x="956" y="47" width="1" height="1" fill="#6a9955" fill-opacity="0.44"/><rect x="957" y="46" width="1" height="1" fill="#6a9955" fill-opacity="0.32"/><rect x="957" y="47" width="1" height="1" fill="#6a9955" fill-opacity="0.44"/><rect x="958" y="46" width="1" height="1" fill="#6a9955" fill-opacity="0.17"/><rect x="958" y="47" width="1" height="1" fill="#6a9955" fill-opacity="0.44"/><rect x="960" y="46" width="1" height="1" fill="#6a9955" fill-opacity="0.17"/><rect x="960" y="47" width="1" height="1" fill="#6a9955" fill-opacity="0.44"/><rect x="961" y="46" width="1" height="1" fill="#6a9955" fill-opacity="0.17"/><rect x="961" y="47" width="1" height="1" fill="#6a9955" fill-opacity="0.44"/><rect x="962" y="46" width="1" height="1" fill="#6a9955" fill-opacity="0.17"/><rect x="962" y="47" width="1" height="1" fill="#6a9955" fill-opacity="0.44"/><rect x="963" y="46" width="1" height="1" fill="#6a9955" fill-opacity="0.32"/><rect x="963" y="47" width="1" height="1" fill="#6a9955" fill-opacity="0.44"/><rect x="964" y="46" width="1" height="1" fill="#6a9955" fill-opacity="0.17"/><rect x="964" y="47" width="1" height="1" fill="#6a9955" fill-opacity="0.44"/><rect x="965" y="46" width="1" height="1" fill="#6a9955" fill-opacity="0.32"/><rect x="965" y="47" width="1" height="1" fill="#6a9955" fill-opacity="0.44"/><rect x="914" y="48" width="1" height="1" fill="#569cd6" fill-opacity="0.32"/><rect x="914" y="49" width="1" height="1" fill="#569cd6" fill-opacity="0.44"/><rect x="915" y="48" width="1" height="1" fill="#569cd6" fill-opacity="0.17"/><rect x="915" y="49" width="1" height="1" fill="#569cd6" fill-opacity="0.44"/><rect x="916" y="48" width="1" height="1" fill="#569cd6" fill-opacity="0.32"/><rect x="916" y="49" width="1" height="1" fill="#569cd6" fill-opacity="0.44"/><rect x="918" y="48" width="1" height="1" fill="#d4d4d4" fill-opacity="0.17"/><rect x="918" y="49" width="1" height="1" fill="#d4d4d4" fill-opacity="0.44"/><rect x="919" y="48" width="1" height="1" fill="#d4d4d4" fill-opacity="0.17"/><rect x="919" y="49" width="1" height="1" fill="#d4d4d4" fill-opacity="0.44"/><rect x="920" y="48" width="1" height="1" fill="#d4d4d4" fill-opacity="0.32"/><rect x="920" y="49" width="1" height="1" fill="#d4d4d4" fill-opacity="0.44"/><rect x="921" y="48" width="1" height="1" fill="#d4d4d4" fill-opacity="0.17"/><rect x="921" y="49" width="1" height="1" fill="#d4d4d4" fill-opacity="0.44"/><rect x="922" y="48" width="1" height="1" fill="#d4d4d4" fill-opacity="0.17"/><rect x="922" y="49" width="1" height="1" fill="#d4d4d4" fill-opacity="0.44"/><rect x="923" y="48" width="1" height="1" fill="#d4d4d4" fill-opacity="0.32"/><rect x="923" y="49" width="1" height="1" fill="#d4d4d4" fill-opacity="0.44"/><rect x="924" y="48" width="1" height="1" fill="#d4d4d4" fill-opacity="0.00"/><rect x="924" y="49" width="1" height="1" fill="#d4d4d4" fill-opacity="0.40"/><rect x="925" y="48" width="1" height="1" fill="#d4d4d4" fill-opacity="0.17"/><rect x="925" y="49" width="1" height="1" fill="#d4d4d4" fill-opacity="0.44"/><rect x="926" y="48" width="1" height="1" fill="#d4d4d4" fill-opacity="0.17"/><rect x="926" y="49" width="1" height="1" fill="#d4d4d4" fill-opacity="0.44"/><rect x="927" y="48" width="1" height="1" fill="#d4d4d4" fill-opacity="0.17"/><rect x="927" y="49" width="1" height="1" fill="#d4d4d4" fill-opacity="0.44"/><rect x="928" y="48" width="1" height="1" fill="#d4d4d4" fill-opacity="0.32"/><rect x="928" y="49" width="1" height="1" fill="#d4d4d4" fill-opacity="0.44"/><rect x="929" y="48" width="1" height="1" fill="#d4d4d4" fill-opacity="0.32"/><rect x="929" y="49" width="1" height="1" fill="#d4d4d4" fill-opacity="0.44"/><rect x="930" y="48" width="1" height="1" fill="#d4d4d4" fill-opacity="0.17"/><rect x="930" y="49" width="1" height="1" fill="#d4d4d4" fill-opacity="0.44"/><rect x="932" y="48" width="1" height="1" fill="#d4d4d4" fill-opacity="0.08"/><rect x="932" y="49" width="1" height="1" fill="#d4d4d4" fill-opacity="0.44"/><rect x="934" y="48" width="1" height="1" fill="#ce9178" fill-opacity="0.32"/><rect x="934" y="49" width="1" height="1" fill="#ce9178" fill-opacity="0.08"/><rect x="935" y="48" width="1" height="1" fill="#569cd6" fill-opacity="0.32"/><rect x="935" y="49" width="1" height="1" fill="#569cd6" fill-opacity="0.44"/><rect x="936" y="48" width="1" height="1" fill="#569cd6" fill-opacity="0.32"/><rect x="936" y="49" width="1" height="1" fill="#569cd6" fill-opacity="0.44"/><rect x="937" y="48" width="1" height="1" fill="#d4d4d4" fill-opacity="0.17"/><rect x="937" y="49" width="1" height="1" fill="#d4d4d4" fill-opacity="0.44"/><rect x="938" y="48" width="1" height="1" fill="#d4d4d4" fill-opacity="0.17"/><rect x="938" y="49" width="1" height="1" fill="#d4d4d4" fill-opacity="0.44"/><rect x="939" y="48" width="1" height="1" fill="#d4d4d4" fill-opacity="0.17"/><rect x="939" y="49" width="1" height="1" fill="#d4d4d4" fill-opacity="0.44"/><rect x="940" y="48" width="1" height="1" fill="#d4d4d4" fill-opacity="0.17"/><rect x="940" y="49" width="1" height="1" fill="#d4d4d4" fill-opacity="0.44"/><rect x="941" y="48" width="1" height="1" fill="#d4d4d4" fill-opacity="0.32"/><rect x="941" y="49" width="1" height="1" fill="#d4d4d4" fill-opacity="0.44"/><rect x="942" y="48" width="1" height="1" fill="#d4d4d4" fill-opacity="0.17"/><rect x="942" y="49" width="1" height="1" fill="#d4d4d4" fill-opacity="0.44"/><rect x="943" y="48" width="1" height="1" fill="#d4d4d4" fill-opacity="0.00"/><rect x="943" y="49" width="1" height="1" fill="#d4d4d4" fill-opacity="0.40"/><rect x="944" y="48" width="1" height="1" fill="#d4d4d4" fill-opacity="0.17"/><rect x="944" y="49" width="1" height="1" fill="#d4d4d4" fill-opacity="0.44"/><rect x="945" y="48" width="1" height="1" fill="#d4d4d4" fill-opacity="0.17"/><rect x="945" y="49" width="1" height="1" fill="#d4d4d4" fill-opacity="0.44"/><rect x="946" y="48" width="1" height="1" fill="#d4d4d4" fill-opacity="0.17"/><rect x="946" y="49" width="1" height="1" fill="#d4d4d4" fill-opacity="0.44"/><rect x="947" y="48" width="1" height="1" fill="#d4d4d4" fill-opacity="0.17"/><rect x="947" y="49" width="1" height="1" fill="#d4d4d4" fill-opacity="0.44"/><rect x="948" y="48" width="1" height="1" fill="#569cd6" fill-opacity="0.32"/><rect x="948" y="49" width="1" height="1" fill="#569cd6" fill-opacity="0.44"/><rect x="949" y="48" width="1" height="1" fill="#ce9178" fill-opacity="0.00"/><rect x="949" y="49" width="1" height="1" fill="#ce9178" fill-opacity="0.40"/><rect x="950" y="48" width="1" height="1" fill="#ce9178" fill-opacity="0.17"/><rect x="950" y="49" width="1" height="1" fill="#ce9178" fill-opacity="0.44"/><rect x="951" y="48" width="1" height="1" fill="#ce9178" fill-opacity="0.17"/><rect x="951" y="49" width="1" height="1" fill="#ce9178" fill-opacity="0.44"/><rect x="952" y="48" width="1" height="1" fill="#ce9178" fill-opacity="0.17"/><rect x="952" y="49" width="1" height="1" fill="#ce9178" fill-opacity="0.44"/><rect x="953" y="48" width="1" height="1" fill="#ce9178" fill-opacity="0.17"/><rect x="953" y="49" width="1" height="1" fill="#ce9178" fill-opacity="0.44"/><rect x="954" y="48" width="1" height="1" fill="#ce9178" fill-opacity="0.17"/><rect x="954" y="49" width="1" height="1" fill="#ce9178" fill-opacity="0.44"/><rect x="955" y="48" width="1" height="1" fill="#ce9178" fill-opacity="0.17"/><rect x="955" y="49" width="1" height="1" fill="#ce9178" fill-opacity="0.44"/><rect x="956" y="48" width="1" height="1" fill="#ce9178" fill-opacity="0.17"/><rect x="956" y="49" width="1" height="1" fill="#ce9178" fill-opacity="0.44"/><rect x="957" y="48" width="1" height="1" fill="#ce9178" fill-opacity="0.17"/><rect x="957" y="49" width="1" height="1" fill="#ce9178" fill-opacity="0.44"/><rect x="958" y="48" width="1" height="1" fill="#ce9178" fill-opacity="0.32"/><rect x="958" y="49" width="1" height="1" fill="#ce9178" fill-opacity="0.44"/><rect x="959" y="48" width="1" height="1" fill="#ce9178" fill-opacity="0.32"/><rect x="959" y="49" width="1" height="1" fill="#ce9178" fill-opacity="0.08"/><rect x="914" y="50" width="1" height="1" fill="#569cd6" fill-opacity="0.32"/><rect x="914" y="51" width="1" height="1" fill="#569cd6" fill-opacity="0.44"/><rect x="915" y="50" width="1" height="1" fill="#569cd6" fill-opacity="0.17"/><rect x="915" y="51" width="1" height="1" fill="#569cd6" fill-opacity="0.44"/><rect x="916" y="50" width="1" height="1" fill="#569cd6" fill-opacity="0.32"/><rect x="916" y="51" width="1" height="1" fill="#569cd6" fill-opacity="0.44"/><rect x="918" y="50" width="1" height="1" fill="#d4d4d4" fill-opacity="0.32"/><rect x="918" y="51" width="1" height="1" fill="#d4d4d4" fill-opacity="0.44"/><rect x="919" y="50" width="1" height="1" fill="#d4d4d4" fill-opacity="0.32"/><rect x="919" y="51" width="1" height="1" fill="#d4d4d4" fill-opacity="0.44"/><rect x="920" y="50" width="1" height="1" fill="#d4d4d4" fill-opacity="0.17"/><rect x="920" y="51" width="1" height="1" fill="#d4d4d4" fill-opacity="0.44"/><rect x="921" y="50" width="1" height="1" fill="#d4d4d4" fill-opacity="0.17"/><rect x="921" y="51" width="1" height="1" fill="#d4d4d4" fill-opacity="0.44"/><rect x="922" y="50" width="1" height="1" fill="#d4d4d4" fill-opacity="0.17"/><rect x="922" y="51" width="1" height="1" fill="#d4d4d4" fill-opacity="0.44"/><rect x="923" y="50" width="1" height="1" fill="#d4d4d4" fill-opacity="0.32"/><rect x="923" y="51" width="1" height="1" fill="#d4d4d4" fill-opacity="0.44"/><rect x="924" y="50" width="1" height="1" fill="#d4d4d4" fill-opacity="0.17"/><rect x="924" y="51" width="1" height="1" fill="#d4d4d4" fill-opacity="0.44"/><rect x="925" y="50" width="1" height="1" fill="#d4d4d4" fill-opacity="0.17"/><rect x="925" y="51" width="1" height="1" fill="#d4d4d4" fill-opacity="0.44"/><rect x="926" y="50" width="1" height="1" fill="#d4d4d4" fill-opacity="0.17"/><rect x="926" y="51" width="1" height="1" fill="#d4d4d4" fill-opacity="0.44"/><rect x="928" y="50" width="1" height="1" fill="#d4d4d4" fill-opacity="0.08"/><rect x="928" y="51" width="1" height="1" fill="#d4d4d4" fill-opacity="0.44"/><rect x="930" y="50" width="1" height="1" fill="#569cd6" fill-opacity="0.17"/><rect x="930" y="51" width="1" height="1" fill="#569cd6" fill-opacity="0.44"/><rect x="931" y="50" width="1" height="1" fill="#569cd6" fill-opacity="0.17"/><rect x="931" y="51" width="1" height="1" fill="#569cd6" fill-opacity="0.44"/><rect x="932" y="50" width="1" height="1" fill="#569cd6" fill-opacity="0.17"/><rect x="932" y="51" width="1" height="1" fill="#569cd6" fill-opacity="0.44"/><rect x="934" y="50" width="1" height="1" fill="#569cd6" fill-opacity="0.32"/><rect x="934" y="51" width="1" height="1" fill="#569cd6" fill-opacity="0.44"/><rect x="935" y="50" width="1" height="1" fill="#569cd6" fill-opacity="0.17"/><rect x="935" y="51" width="1" height="1" fill="#569cd6" fill-opacity="0.44"/><rect x="936" y="50" width="1" height="1" fill="#569cd6" fill-opacity="0.32"/><rect x="936" y="51" width="1" height="1" fill="#569cd6" fill-opacity="0.44"/><rect x="937" y="50" width="1" height="1" fill="#569cd6" fill-opacity="0.17"/><rect x="937" y="51" width="1" height="1" fill="#569cd6" fill-opacity="0.44"/><rect x="938" y="50" width="1" height="1" fill="#da70d6" fill-opacity="0.32"/><rect x="938" y="51" width="1" height="1" fill="#da70d6" fill-opacity="0.44"/><rect x="939" y="50" width="1" height="1" fill="#da70d6" fill-opacity="0.32"/><rect x="939" y="51" width="1" height="1" fill="#da70d6" fill-opacity="0.44"/><rect x="940" y="50" width="1" height="1" fill="#d4d4d4" fill-opacity="0.08"/><rect x="940" y="51" width="1" height="1" fill="#d4d4d4" fill-opacity="0.32"/><rect x="941" y="50" width="1" height="1" fill="#d4d4d4" fill-opacity="0.32"/><rect x="941" y="51" width="1" height="1" fill="#d4d4d4" fill-opacity="0.44"/><rect x="942" y="50" width="1" height="1" fill="#d4d4d4" fill-opacity="0.17"/><rect x="942" y="51" width="1" height="1" fill="#d4d4d4" fill-opacity="0.44"/><rect x="943" y="50" width="1" height="1" fill="#d4d4d4" fill-opacity="0.17"/><rect x="943" y="51" width="1" height="1" fill="#d4d4d4" fill-opacity="0.44"/><rect x="944" y="50" width="1" height="1" fill="#d4d4d4" fill-opacity="0.17"/><rect x="944" y="51" width="1" height="1" fill="#d4d4d4" fill-opacity="0.44"/><rect x="945" y="50" width="1" height="1" fill="#d4d4d4" fill-opacity="0.17"/><rect x="945" y="51" width="1" height="1" fill="#d4d4d4" fill-opacity="0.44"/><rect x="946" y="50" width="1" height="1" fill="#d4d4d4" fill-opacity="0.32"/><rect x="946" y="51" width="1" height="1" fill="#d4d4d4" fill-opacity="0.44"/><rect x="947" y="50" width="1" height="1" fill="#da70d6" fill-opacity="0.32"/><rect x="947" y="51" width="1" height="1" fill="#da70d6" fill-opacity="0.44"/><rect x="948" y="50" width="1" height="1" fill="#ce9178" fill-opacity="0.32"/><rect x="948" y="51" width="1" height="1" fill="#ce9178" fill-opacity="0.08"/><rect x="949" y="50" width="1" height="1" fill="#ce9178" fill-opacity="0.17"/><rect x="949" y="51" width="1" height="1" fill="#ce9178" fill-opacity="0.44"/><rect x="950" y="50" width="1" height="1" fill="#ce9178" fill-opacity="0.17"/><rect x="950" y="51" width="1" height="1" fill="#ce9178" fill-opacity="0.44"/><rect x="951" y="50" width="1" height="1" fill="#ce9178" fill-opacity="0.17"/><rect x="951" y="51" width="1" height="1" fill="#ce9178" fill-opacity="0.44"/><rect x="952" y="50" width="1" height="1" fill="#ce9178" fill-opacity="0.17"/><rect x="952" y="51" width="1" height="1" fill="#ce9178" fill-opacity="0.44"/><rect x="953" y="50" width="1" height="1" fill="#ce9178" fill-opacity="0.08"/><rect x="953" y="51" width="1" height="1" fill="#ce9178" fill-opacity="0.44"/><rect x="954" y="50" width="1" height="1" fill="#ce9178" fill-opacity="0.32"/><rect x="954" y="51" width="1" height="1" fill="#ce9178" fill-opacity="0.44"/><rect x="955" y="50" width="1" height="1" fill="#ce9178" fill-opacity="0.32"/><rect x="955" y="51" width="1" height="1" fill="#ce9178" fill-opacity="0.44"/><rect x="956" y="50" width="1" height="1" fill="#ce9178" fill-opacity="0.08"/><rect x="956" y="51" width="1" height="1" fill="#ce9178" fill-opacity="0.44"/><rect x="957" y="50" width="1" height="1" fill="#ce9178" fill-opacity="0.32"/><rect x="957" y="51" width="1" height="1" fill="#ce9178" fill-opacity="0.44"/><rect x="958" y="50" width="1" height="1" fill="#ce9178" fill-opacity="0.32"/><rect x="958" y="51" width="1" height="1" fill="#ce9178" fill-opacity="0.44"/><rect x="959" y="50" width="1" height="1" fill="#ce9178" fill-opacity="0.32"/><rect x="959" y="51" width="1" height="1" fill="#ce9178" fill-opacity="0.08"/><rect x="960" y="50" width="1" height="1" fill="#da70d6" fill-opacity="0.32"/><rect x="960" y="51" width="1" height="1" fill="#da70d6" fill-opacity="0.44"/><rect x="914" y="54" width="1" height="1" fill="#ce9178" fill-opacity="0.32"/><rect x="914" y="55" width="1" height="1" fill="#ce9178" fill-opacity="0.08"/><rect x="915" y="54" width="1" height="1" fill="#ce9178" fill-opacity="0.32"/><rect x="915" y="55" width="1" height="1" fill="#ce9178" fill-opacity="0.08"/><rect x="916" y="54" width="1" height="1" fill="#ce9178" fill-opacity="0.32"/><rect x="916" y="55" width="1" height="1" fill="#ce9178" fill-opacity="0.08"/><rect x="914" y="56" width="1" height="1" fill="#ce9178" fill-opacity="0.17"/><rect x="914" y="57" width="1" height="1" fill="#ce9178" fill-opacity="0.44"/><rect x="915" y="56" width="1" height="1" fill="#ce9178" fill-opacity="0.17"/><rect x="915" y="57" width="1" height="1" fill="#ce9178" fill-opacity="0.44"/><rect x="916" y="56" width="1" height="1" fill="#ce9178" fill-opacity="0.32"/><rect x="916" y="57" width="1" height="1" fill="#ce9178" fill-opacity="0.44"/><rect x="917" y="56" width="1" height="1" fill="#ce9178" fill-opacity="0.17"/><rect x="917" y="57" width="1" height="1" fill="#ce9178" fill-opacity="0.44"/><rect x="919" y="56" width="1" height="1" fill="#ce9178" fill-opacity="0.32"/><rect x="919" y="57" width="1" height="1" fill="#ce9178" fill-opacity="0.08"/><rect x="920" y="56" width="1" height="1" fill="#ce9178" fill-opacity="0.32"/><rect x="920" y="57" width="1" height="1" fill="#ce9178" fill-opacity="0.44"/><rect x="921" y="56" width="1" height="1" fill="#ce9178" fill-opacity="0.17"/><rect x="921" y="57" width="1" height="1" fill="#ce9178" fill-opacity="0.44"/><rect x="922" y="56" width="1" height="1" fill="#ce9178" fill-opacity="0.17"/><rect x="922" y="57" width="1" height="1" fill="#ce9178" fill-opacity="0.44"/><rect x="923" y="56" width="1" height="1" fill="#ce9178" fill-opacity="0.17"/><rect x="923" y="57" width="1" height="1" fill="#ce9178" fill-opacity="0.44"/><rect x="924" y="56" width="1" height="1" fill="#ce9178" fill-opacity="0.17"/><rect x="924" y="57" width="1" height="1" fill="#ce9178" fill-opacity="0.44"/><rect x="925" y="56" width="1" height="1" fill="#ce9178" fill-opacity="0.17"/><rect x="925" y="57" width="1" height="1" fill="#ce9178" fill-opacity="0.44"/><rect x="926" y="56" width="1" height="1" fill="#ce9178" fill-opacity="0.17"/><rect x="926" y="57" width="1" height="1" fill="#ce9178" fill-opacity="0.44"/><rect x="927" y="56" width="1" height="1" fill="#ce9178" fill-opacity="0.32"/><rect x="927" y="57" width="1" height="1" fill="#ce9178" fill-opacity="0.44"/><rect x="928" y="56" width="1" height="1" fill="#ce9178" fill-opacity="0.17"/><rect x="928" y="57" width="1" height="1" fill="#ce9178" fill-opacity="0.44"/><rect x="929" y="56" width="1" height="1" fill="#ce9178" fill-opacity="0.17"/><rect x="929" y="57" width="1" height="1" fill="#ce9178" fill-opacity="0.44"/><rect x="931" y="56" width="1" height="1" fill="#569cd6" fill-opacity="0.32"/><rect x="931" y="57" width="1" height="1" fill="#569cd6" fill-opacity="0.44"/><rect x="932" y="56" width="1" height="1" fill="#569cd6" fill-opacity="0.32"/><rect x="932" y="57" width="1" height="1" fill="#569cd6" fill-opacity="0.44"/><rect x="933" y="56" width="1" height="1" fill="#d4d4d4" fill-opacity="0.17"/><rect x="933" y="57" width="1" height="1" fill="#d4d4d4" fill-opacity="0.44"/><rect x="934" y="56" width="1" height="1" fill="#d4d4d4" fill-opacity="0.17"/><rect x="934" y="57" width="1" height="1" fill="#d4d4d4" fill-opacity="0.44"/><rect x="935" y="56" width="1" height="1" fill="#d4d4d4" fill-opacity="0.17"/><rect x="935" y="57" width="1" height="1" fill="#d4d4d4" fill-opacity="0.44"/><rect x="936" y="56" width="1" height="1" fill="#d4d4d4" fill-opacity="0.17"/><rect x="936" y="57" width="1" height="1" fill="#d4d4d4" fill-opacity="0.44"/><rect x="937" y="56" width="1" height="1" fill="#d4d4d4" fill-opacity="0.32"/><rect x="937" y="57" width="1" height="1" fill="#d4d4d4" fill-opacity="0.44"/><rect x="938" y="56" width="1" height="1" fill="#d4d4d4" fill-opacity="0.17"/><rect x="938" y="57" width="1" height="1" fill="#d4d4d4" fill-opacity="0.44"/><rect x="939" y="56" width="1" height="1" fill="#d4d4d4" fill-opacity="0.00"/><rect x="939" y="57" width="1" height="1" fill="#d4d4d4" fill-opacity="0.40"/><rect x="940" y="56" width="1" height="1" fill="#d4d4d4" fill-opacity="0.17"/><rect x="940" y="57" width="1" height="1" fill="#d4d4d4" fill-opacity="0.44"/><rect x="941" y="56" width="1" height="1" fill="#d4d4d4" fill-opacity="0.17"/><rect x="941" y="57" width="1" height="1" fill="#d4d4d4" fill-opacity="0.44"/><rect x="942" y="56" width="1" height="1" fill="#d4d4d4" fill-opacity="0.17"/><rect x="942" y="57" width="1" height="1" fill="#d4d4d4" fill-opacity="0.44"/><rect x="943" y="56" width="1" height="1" fill="#d4d4d4" fill-opacity="0.17"/><rect x="943" y="57" width="1" height="1" fill="#d4d4d4" fill-opacity="0.44"/><rect x="944" y="56" width="1" height="1" fill="#569cd6" fill-opacity="0.32"/><rect x="944" y="57" width="1" height="1" fill="#569cd6" fill-opacity="0.44"/><rect x="946" y="56" width="1" height="1" fill="#ce9178" fill-opacity="0.17"/><rect x="946" y="57" width="1" height="1" fill="#ce9178" fill-opacity="0.44"/><rect x="947" y="56" width="1" height="1" fill="#ce9178" fill-opacity="0.17"/><rect x="947" y="57" width="1" height="1" fill="#ce9178" fill-opacity="0.44"/><rect x="949" y="56" width="1" height="1" fill="#569cd6" fill-opacity="0.32"/><rect x="949" y="57" width="1" height="1" fill="#569cd6" fill-opacity="0.44"/><rect x="950" y="56" width="1" height="1" fill="#569cd6" fill-opacity="0.32"/><rect x="950" y="57" width="1" height="1" fill="#569cd6" fill-opacity="0.44"/><rect x="951" y="56" width="1" height="1" fill="#d4d4d4" fill-opacity="0.32"/><rect x="951" y="57" width="1" height="1" fill="#d4d4d4" fill-opacity="0.44"/><rect x="952" y="56" width="1" height="1" fill="#d4d4d4" fill-opacity="0.32"/><rect x="952" y="57" width="1" height="1" fill="#d4d4d4" fill-opacity="0.44"/><rect x="953" y="56" width="1" height="1" fill="#d4d4d4" fill-opacity="0.17"/><rect x="953" y="57" width="1" height="1" fill="#d4d4d4" fill-opacity="0.44"/><rect x="954" y="56" width="1" height="1" fill="#d4d4d4" fill-opacity="0.17"/><rect x="954" y="57" width="1" height="1" fill="#d4d4d4" fill-opacity="0.44"/><rect x="955" y="56" width="1" height="1" fill="#d4d4d4" fill-opacity="0.17"/><rect x="955" y="57" width="1" height="1" fill="#d4d4d4" fill-opacity="0.44"/><rect x="956" y="56" width="1" height="1" fill="#d4d4d4" fill-opacity="0.32"/><rect x="956" y="57" width="1" height="1" fill="#d4d4d4" fill-opacity="0.44"/><rect x="957" y="56" width="1" height="1" fill="#d4d4d4" fill-opacity="0.17"/><rect x="957" y="57" width="1" height="1" fill="#d4d4d4" fill-opacity="0.44"/><rect x="958" y="56" width="1" height="1" fill="#d4d4d4" fill-opacity="0.17"/><rect x="958" y="57" width="1" height="1" fill="#d4d4d4" fill-opacity="0.44"/><rect x="959" y="56" width="1" height="1" fill="#d4d4d4" fill-opacity="0.17"/><rect x="959" y="57" width="1" height="1" fill="#d4d4d4" fill-opacity="0.44"/><rect x="960" y="56" width="1" height="1" fill="#569cd6" fill-opacity="0.32"/><rect x="960" y="57" width="1" height="1" fill="#569cd6" fill-opacity="0.44"/><rect x="961" y="56" width="1" height="1" fill="#ce9178" fill-opacity="0.32"/><rect x="961" y="57" width="1" height="1" fill="#ce9178" fill-opacity="0.08"/><rect x="963" y="56" width="1" height="1" fill="#ce9178" fill-opacity="0.08"/><rect x="963" y="57" width="1" height="1" fill="#ce9178" fill-opacity="0.44"/><rect x="965" y="56" width="1" height="1" fill="#569cd6" fill-opacity="0.32"/><rect x="965" y="57" width="1" height="1" fill="#569cd6" fill-opacity="0.44"/><rect x="966" y="56" width="1" height="1" fill="#569cd6" fill-opacity="0.32"/><rect x="966" y="57" width="1" height="1" fill="#569cd6" fill-opacity="0.44"/><rect x="967" y="56" width="1" height="1" fill="#d4d4d4" fill-opacity="0.17"/><rect x="967" y="57" width="1" height="1" fill="#d4d4d4" fill-opacity="0.44"/><rect x="968" y="56" width="1" height="1" fill="#d4d4d4" fill-opacity="0.17"/><rect x="968" y="57" width="1" height="1" fill="#d4d4d4" fill-opacity="0.44"/><rect x="969" y="56" width="1" height="1" fill="#d4d4d4" fill-opacity="0.32"/><rect x="969" y="57" width="1" height="1" fill="#d4d4d4" fill-opacity="0.44"/><rect x="970" y="56" width="1" height="1" fill="#d4d4d4" fill-opacity="0.17"/><rect x="970" y="57" width="1" height="1" fill="#d4d4d4" fill-opacity="0.44"/><rect x="971" y="56" width="1" height="1" fill="#d4d4d4" fill-opacity="0.17"/><rect x="971" y="57" width="1" height="1" fill="#d4d4d4" fill-opacity="0.44"/><rect x="972" y="56" width="1" height="1" fill="#d4d4d4" fill-opacity="0.32"/><rect x="972" y="57" width="1" height="1" fill="#d4d4d4" fill-opacity="0.44"/><rect x="973" y="56" width="1" height="1" fill="#d4d4d4" fill-opacity="0.00"/><rect x="973" y="57" width="1" height="1" fill="#d4d4d4" fill-opacity="0.40"/><rect x="974" y="56" width="1" height="1" fill="#d4d4d4" fill-opacity="0.17"/><rect x="974" y="57" width="1" height="1" fill="#d4d4d4" fill-opacity="0.44"/><rect x="975" y="56" width="1" height="1" fill="#d4d4d4" fill-opacity="0.17"/><rect x="975" y="57" width="1" height="1" fill="#d4d4d4" fill-opacity="0.44"/><rect x="976" y="56" width="1" height="1" fill="#d4d4d4" fill-opacity="0.17"/><rect x="976" y="57" width="1" height="1" fill="#d4d4d4" fill-opacity="0.44"/><rect x="977" y="56" width="1" height="1" fill="#d4d4d4" fill-opacity="0.32"/><rect x="977" y="57" width="1" height="1" fill="#d4d4d4" fill-opacity="0.44"/><rect x="978" y="56" width="1" height="1" fill="#d4d4d4" fill-opacity="0.32"/><rect x="978" y="57" width="1" height="1" fill="#d4d4d4" fill-opacity="0.44"/><rect x="979" y="56" width="1" height="1" fill="#d4d4d4" fill-opacity="0.17"/><rect x="979" y="57" width="1" height="1" fill="#d4d4d4" fill-opacity="0.44"/><rect x="980" y="56" width="1" height="1" fill="#569cd6" fill-opacity="0.32"/><rect x="980" y="57" width="1" height="1" fill="#569cd6" fill-opacity="0.44"/><rect x="981" y="56" width="1" height="1" fill="#ce9178" fill-opacity="0.08"/><rect x="981" y="57" width="1" height="1" fill="#ce9178" fill-opacity="0.32"/><rect x="982" y="56" width="1" height="1" fill="#ce9178" fill-opacity="0.32"/><rect x="982" y="57" width="1" height="1" fill="#ce9178" fill-opacity="0.44"/><rect x="983" y="56" width="1" height="1" fill="#ce9178" fill-opacity="0.17"/><rect x="983" y="57" width="1" height="1" fill="#ce9178" fill-opacity="0.44"/><rect x="984" y="56" width="1" height="1" fill="#ce9178" fill-opacity="0.32"/><rect x="984" y="57" width="1" height="1" fill="#ce9178" fill-opacity="0.44"/><rect x="914" y="58" width="1" height="1" fill="#ce9178" fill-opacity="0.32"/><rect x="914" y="59" width="1" height="1" fill="#ce9178" fill-opacity="0.08"/><rect x="915" y="58" width="1" height="1" fill="#ce9178" fill-opacity="0.32"/><rect x="915" y="59" width="1" height="1" fill="#ce9178" fill-opacity="0.08"/><rect x="916" y="58" width="1" height="1" fill="#ce9178" fill-opacity="0.32"/><rect x="916" y="59" width="1" height="1" fill="#ce9178" fill-opacity="0.08"/><rect x="910" y="60" width="1" height="1" fill="#ffd700" fill-opacity="0.32"/><rect x="910" y="61" width="1" height="1" fill="#ffd700" fill-opacity="0.44"/><rect x="910" y="64" width="1" height="1" fill="#569cd6" fill-opacity="0.17"/><rect x="910" y="65" width="1" height="1" fill="#569cd6" fill-opacity="0.44"/><rect x="911" y="64" width="1" height="1" fill="#569cd6" fill-opacity="0.17"/><rect x="911" y="65" width="1" height="1" fill="#569cd6" fill-opacity="0.44"/><rect x="912" y="64" width="1" height="1" fill="#569cd6" fill-opacity="0.17"/><rect x="912" y="65" width="1" height="1" fill="#569cd6" fill-opacity="0.44"/><rect x="913" y="64" width="1" height="1" fill="#569cd6" fill-opacity="0.32"/><rect x="913" y="65" width="1" height="1" fill="#569cd6" fill-opacity="0.44"/><rect x="914" y="64" width="1" height="1" fill="#569cd6" fill-opacity="0.32"/><rect x="914" y="65" width="1" height="1" fill="#569cd6" fill-opacity="0.44"/><rect x="915" y="64" width="1" height="1" fill="#569cd6" fill-opacity="0.32"/><rect x="915" y="65" width="1" height="1" fill="#569cd6" fill-opacity="0.44"/><rect x="916" y="64" width="1" height="1" fill="#569cd6" fill-opacity="0.17"/><rect x="916" y="65" width="1" height="1" fill="#569cd6" fill-opacity="0.44"/><rect x="917" y="64" width="1" height="1" fill="#569cd6" fill-opacity="0.17"/><rect x="917" y="65" width="1" height="1" fill="#569cd6" fill-opacity="0.44"/><rect x="919" y="64" width="1" height="1" fill="#ffd700" fill-opacity="0.32"/><rect x="919" y="65" width="1" height="1" fill="#ffd700" fill-opacity="0.44"/><rect x="914" y="66" width="1" height="1" fill="#d4d4d4" fill-opacity="0.32"/><rect x="914" y="67" width="1" height="1" fill="#d4d4d4" fill-opacity="0.44"/><rect x="915" y="66" width="1" height="1" fill="#d4d4d4" fill-opacity="0.32"/><rect x="915" y="67" width="1" height="1" fill="#d4d4d4" fill-opacity="0.44"/><rect x="916" y="66" width="1" height="1" fill="#d4d4d4" fill-opacity="0.32"/><rect x="916" y="67" width="1" height="1" fill="#d4d4d4" fill-opacity="0.44"/><rect x="917" y="66" width="1" height="1" fill="#d4d4d4" fill-opacity="0.32"/><rect x="917" y="67" width="1" height="1" fill="#d4d4d4" fill-opacity="0.44"/><rect x="918" y="66" width="1" height="1" fill="#d4d4d4" fill-opacity="0.32"/><rect x="918" y="67" width="1" height="1" fill="#d4d4d4" fill-opacity="0.44"/><rect x="919" y="66" width="1" height="1" fill="#d4d4d4" fill-opacity="0.32"/><rect x="919" y="67" width="1" height="1" fill="#d4d4d4" fill-opacity="0.44"/><rect x="920" y="66" width="1" height="1" fill="#d4d4d4" fill-opacity="0.32"/><rect x="920" y="67" width="1" height="1" fill="#d4d4d4" fill-opacity="0.44"/><rect x="921" y="66" width="1" height="1" fill="#d4d4d4" fill-opacity="0.00"/><rect x="921" y="67" width="1" height="1" fill="#d4d4d4" fill-opacity="0.40"/><rect x="922" y="66" width="1" height="1" fill="#d4d4d4" fill-opacity="0.32"/><rect x="922" y="67" width="1" height="1" fill="#d4d4d4" fill-opacity="0.44"/><rect x="923" y="66" width="1" height="1" fill="#d4d4d4" fill-opacity="0.32"/><rect x="923" y="67" width="1" height="1" fill="#d4d4d4" fill-opacity="0.44"/><rect x="924" y="66" width="1" height="1" fill="#d4d4d4" fill-opacity="0.32"/><rect x="924" y="67" width="1" height="1" fill="#d4d4d4" fill-opacity="0.44"/><rect x="925" y="66" width="1" height="1" fill="#d4d4d4" fill-opacity="0.32"/><rect x="925" y="67" width="1" height="1" fill="#d4d4d4" fill-opacity="0.44"/><rect x="926" y="66" width="1" height="1" fill="#d4d4d4" fill-opacity="0.32"/><rect x="926" y="67" width="1" height="1" fill="#d4d4d4" fill-opacity="0.44"/><rect x="927" y="66" width="1" height="1" fill="#da70d6" fill-opacity="0.32"/><rect x="927" y="67" width="1" height="1" fill="#da70d6" fill-opacity="0.44"/><rect x="928" y="66" width="1" height="1" fill="#d4d4d4" fill-opacity="0.32"/><rect x="928" y="67" width="1" height="1" fill="#d4d4d4" fill-opacity="0.44"/><rect x="929" y="66" width="1" height="1" fill="#d4d4d4" fill-opacity="0.17"/><rect x="929" y="67" width="1" height="1" fill="#d4d4d4" fill-opacity="0.44"/><rect x="930" y="66" width="1" height="1" fill="#d4d4d4" fill-opacity="0.17"/><rect x="930" y="67" width="1" height="1" fill="#d4d4d4" fill-opacity="0.44"/><rect x="931" y="66" width="1" height="1" fill="#d4d4d4" fill-opacity="0.17"/><rect x="931" y="67" width="1" height="1" fill="#d4d4d4" fill-opacity="0.44"/><rect x="932" y="66" width="1" height="1" fill="#d4d4d4" fill-opacity="0.32"/><rect x="932" y="67" width="1" height="1" fill="#d4d4d4" fill-opacity="0.44"/><rect x="933" y="66" width="1" height="1" fill="#d4d4d4" fill-opacity="0.00"/><rect x="933" y="67" width="1" height="1" fill="#d4d4d4" fill-opacity="0.40"/><rect x="934" y="66" width="1" height="1" fill="#d4d4d4" fill-opacity="0.17"/><rect x="934" y="67" width="1" height="1" fill="#d4d4d4" fill-opacity="0.44"/><rect x="935" y="66" width="1" height="1" fill="#d4d4d4" fill-opacity="0.32"/><rect x="935" y="67" width="1" height="1" fill="#d4d4d4" fill-opacity="0.44"/><rect x="936" y="66" width="1" height="1" fill="#da70d6" fill-opacity="0.32"/><rect x="936" y="67" width="1" height="1" fill="#da70d6" fill-opacity="0.44"/><rect x="910" y="68" width="1" height="1" fill="#ffd700" fill-opacity="0.32"/><rect x="910" y="69" width="1" height="1" fill="#ffd700" fill-opacity="0.44"/><rect x="910" y="26" width="112" height="2" fill="#7a2a1e"/><rect x="910" y="26" width="54" height="2" fill="#d94a1e"/><rect x="910" y="26" width="8" height="2" fill="#f0641e"/><rect x="910" y="66" width="112" height="2" fill="#7a2a1e"/><rect x="928" y="66" width="9" height="2" fill="#b83a1f"/></svg>
<div class="a" style="left:1036px;top:0;width:1px;height:504px;background:#3c3c3c"></div>
<div class="a" style="left:1022px;top:22px;width:1px;height:482px;background:#3c3c3c"></div>
<div class="a" style="left:1022px;top:22px;width:14px;height:1px;background:#3c3c3c"></div>
<div class="a" style="left:1032px;top:40px;width:4px;height:10px;background:#e8601c"></div>
<div class="a" style="left:1032px;top:235px;width:4px;height:9px;background:#c0392b"></div>
<div class="a" style="left:1023px;top:252px;width:13px;height:2px;background:#a0a0a0"></div>
<div class="a" style="left:0;top:504px;width:1047px;height:1px;background:#3d3d3d"></div>
<div class="a tab" style="left:19px;letter-spacing:-0.3px;color:#e7e7e7">PROBLEMS</div>
<div class="a tab" style="left:126px;letter-spacing:0.12px">OUTPUT</div>
<div class="a tab" style="left:196px;letter-spacing:0.0px">DEBUG CONSOLE</div>
<div class="a tab" style="left:315px;letter-spacing:-0.03px">TERMINAL</div>
<div class="a tab" style="left:394px;letter-spacing:0.05px">PORTS</div>
<div class="a tab" style="left:455px;letter-spacing:-0.1px">SPELL CHECKER</div>
<div class="a" style="left:83px;top:514px;width:21px;height:16px;border-radius:8.0px;background:#2f72d4;color:#fff;font-size:11px;line-height:16px;text-align:center;font-weight:bold;letter-spacing:-0.3px;text-indent:-0.3px">16</div>
<div class="a" style="left:548px;top:514px;width:28px;height:16px;border-radius:8.0px;background:#2f72d4;color:#fff;font-size:11px;line-height:16px;text-align:center;font-weight:bold;letter-spacing:-0.3px;text-indent:-0.3px">106</div>
<div class="a" style="left:17px;top:533px;width:87px;height:1px;background:#e7e7e7"></div>
<svg class="a" style="left:12px;top:545px" width="12" height="12" viewBox="0 0 12 12"><path d="M1 3.5 L6 8.5 L11 3.5" fill="none" stroke="#c5c5c5" stroke-width="1.1"/></svg>
<svg class="a" style="left:29px;top:542px" width="16" height="16" viewBox="0 0 16 16"><defs><clipPath id="c29542"><rect x="0" y="0" width="16" height="16"/></clipPath></defs><g clip-path="url(#c29542)" fill="none" stroke="#4bcaa3" stroke-width="3.2"><circle cx="-1.4" cy="8" r="7.75"/><circle cx="17.4" cy="8" r="7.75"/></g></svg>
<div class="a ui" style="left:51px;top:542px;line-height:18px;letter-spacing:0.34px">nonlethal_syntax.nf</div>
<div class="a" style="left:180px;top:542px;width:18px;height:18px;border-radius:9px;background:#4d4d4d;color:#fff;font-size:11px;line-height:18px;text-align:center;font-weight:bold">3</div>
<div class="a" style="left:15px;top:561px;width:1px;height:65px;background:#3a3a3a"></div>
<svg class="a" style="left:43px;top:564px" width="16" height="16" viewBox="0 0 16 16"><circle cx="8" cy="8" r="6.4" fill="none" stroke="#e5574c" stroke-width="1"/><path d="M5.2 5.2 L10.8 10.8 M10.8 5.2 L5.2 10.8" stroke="#e5574c" stroke-width="1"/></svg>
<div class="a ui" style="left:65px;top:564px;line-height:18px;letter-spacing:0.36px">Statements cannot be mixed with script declarations -- move statements into a process or workflow</div>
<div class="a ui" style="left:674.5px;top:564px;line-height:18px;letter-spacing:0.47px;color:#9d9d9d">nextflow</div>
<div class="a ui" style="left:733px;top:564px;line-height:18px;letter-spacing:0.19px;color:#9d9d9d">[Ln 3, Col 1]</div>
<svg class="a" style="left:43px;top:586px" width="16" height="16" viewBox="0 0 16 16"><circle cx="8" cy="8" r="6.4" fill="none" stroke="#e5574c" stroke-width="1"/><path d="M5.2 5.2 L10.8 10.8 M10.8 5.2 L5.2 10.8" stroke="#e5574c" stroke-width="1"/></svg>
<div class="a ui" style="left:65px;top:586px;line-height:18px;letter-spacing:0.57px">`input_ch` is not defined</div>
<div class="a ui" style="left:222px;top:586px;line-height:18px;letter-spacing:0.47px;color:#9d9d9d">nextflow</div>
<div class="a ui" style="left:280px;top:586px;line-height:18px;letter-spacing:0.29px;color:#9d9d9d">[Ln 23, Col 19]</div>
<svg class="a" style="left:43px;top:608px" width="16" height="16" viewBox="0 0 16 16"><path d="M8 1.8 L14.6 13.4 L1.4 13.4 Z" fill="none" stroke="#cca700" stroke-width="1.1" stroke-linejoin="round"/><path d="M8 5.8 L8 10" stroke="#cca700" stroke-width="1.3"/><rect x="7.35" y="11" width="1.3" height="1.2" fill="#cca700"/></svg>
<div class="a ui" style="left:65px;top:608px;line-height:18px;letter-spacing:0.33px">Variable was declared but not used</div>
<div class="a ui" style="left:283px;top:608px;line-height:18px;letter-spacing:0.47px;color:#9d9d9d">nextflow</div>
<div class="a ui" style="left:341px;top:608px;line-height:18px;letter-spacing:0.19px;color:#9d9d9d">[Ln 3, Col 1]</div>
</body></html>
